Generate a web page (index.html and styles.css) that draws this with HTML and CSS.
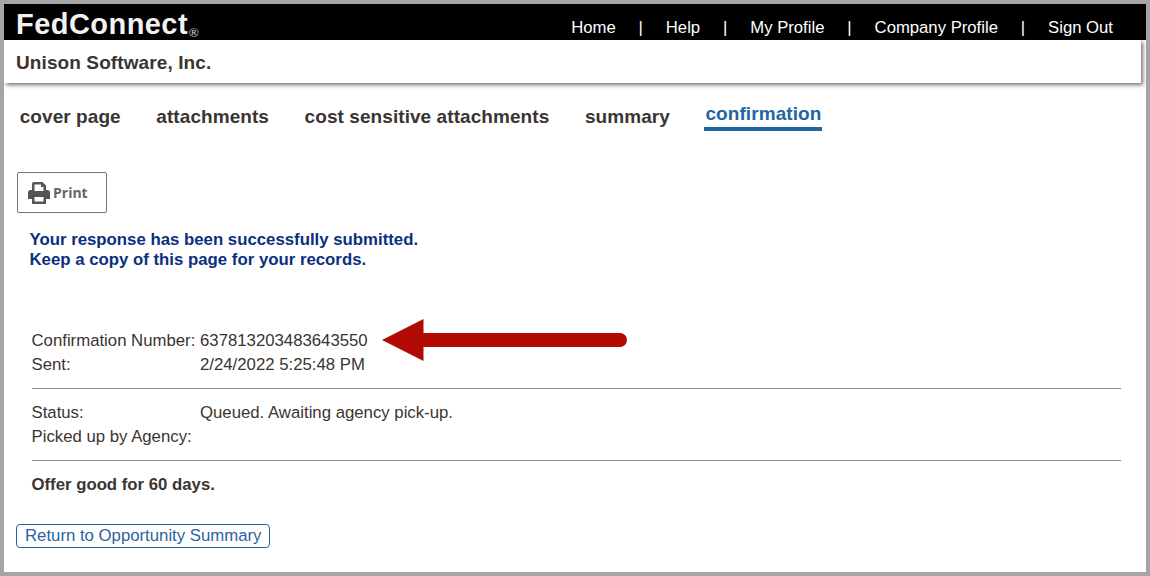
FILE: index.html
```html
<!DOCTYPE html>
<html lang="en">
<head>
<meta charset="utf-8">
<title>FedConnect</title>
<link rel="stylesheet" href="styles.css">
</head>
<body>
<div class="frame">
  <header class="topbar">
    <div class="logo">FedConnect<span class="reg">®</span></div>
    <nav class="topnav">
      <a>Home</a><span class="sep">|</span><a>Help</a><span class="sep">|</span><a>My Profile</a><span class="sep">|</span><a>Company Profile</a><span class="sep">|</span><a>Sign Out</a>
    </nav>
  </header>
  <div class="company">Unison Software, Inc.</div>
  <nav class="tabs">
    <a class="tab">cover page</a>
    <a class="tab">attachments</a>
    <a class="tab">cost sensitive attachments</a>
    <a class="tab">summary</a>
    <a class="tab active">confirmation</a>
  </nav>
  <button class="print" type="button">
    <svg class="print-icon" viewBox="0 0 22 22" width="22" height="22" aria-hidden="true">
      <path fill="#555" fill-rule="evenodd" d="M4 2C4 .9 4.900 0 6 0H14.500L18 3.500V8H19.500C21 8 22 9 22 10.500V17H18V22H4V17H0V10.500C0 9 1 8 2.500 8H4V2zM6.500 2.500V9H15.500V5H13V2.500H6.500zM6.500 15V19.500H15.500V15H6.500z"/>
    </svg>
    <span>Print</span>
  </button>
  <p class="message">Your response has been successfully submitted.<br>Keep a copy of this page for your records.</p>
  <section class="details">
    <div class="row"><span class="label">Confirmation Number:</span><span>637813203483643550</span></div>
    <div class="row"><span class="label">Sent:</span><span>2/24/2022 5:25:48 PM</span></div>
    <hr class="rule">
    <div class="row"><span class="label">Status:</span><span>Queued. Awaiting agency pick-up.</span></div>
    <div class="row"><span class="label">Picked up by Agency:</span><span></span></div>
    <hr class="rule">
    <div class="offer">Offer good for 60 days.</div>
  </section>
  <a class="return">Return to Opportunity Summary</a>
  <svg class="arrow" viewBox="0 0 246 42" width="246" height="42" aria-hidden="true">
    <path fill="#b00a02" d="M0 21L41.500 0V14H238a7 7 0 0 1 0 14H41.500V42z"/>
  </svg>
</div>
</body>
</html>
```
FILE: styles.css
```css
* { box-sizing: border-box; }
html, body { margin: 0; padding: 0; }
body { background: #fff; font-family: "Liberation Sans", Arial, sans-serif; color: #3a3432; }
.frame {
  position: relative;
  width: 1150px;
  height: 576px;
  border: 4px solid #a5a5a5;
  background: #fff;
  overflow: hidden;
}
.topbar {
  height: 36px;
  background: #000;
  color: #fff;
  display: flex;
  justify-content: space-between;
  padding: 0 33px 0 12px;
}
.logo {
  font-size: 29px;
  font-weight: 700;
  line-height: 40px;
  height: 36px;
  letter-spacing: 0.45px;
  color: #f2f2f2;
}
.reg {
  font-size: 13px;
  font-weight: 700;
  color: #aaa;
  letter-spacing: 0;
  margin-left: 1px;
  vertical-align: -3px;
  line-height: 1;
}
.topnav {
  display: flex;
  align-items: center;
  font-size: 16.700px;
  padding-top: 11px;
}
.sep { margin: 0 22.900px; }
.company {
  height: 43px;
  width: 1137px;
  padding: 1px 0 0 12px;
  font-size: 19px;
  font-weight: 700;
  line-height: 43px;
  background: #fff;
  box-shadow: 2px 2px 4px rgba(0,0,0,.55);
  letter-spacing: 0.1px;
}
.tabs {
  display: flex;
  align-items: flex-end;
  gap: 33.600px;
  height: 48px;
  padding-left: 14.700px;
  font-size: 19px;
  font-weight: 700;
  letter-spacing: 0.07px;
}
.tab { padding: 3px 1px 3px; line-height: 22px; height: 28px; display: block; }
.tab.active {
  color: #2364a2;
  border-bottom: 4px solid #2364a2;
  padding-top: 0;
  padding-bottom: 2px;
}
.print {
  display: flex;
  align-items: center;
  gap: 3px;
  margin: 41px 0 0 13px;
  width: 90px;
  height: 41px;
  padding: 0 0 0 10px;
  background: #fff;
  border: 1px solid #777;
  border-radius: 2px;
  font-family: "Open Sans", sans-serif;
  font-size: 14px;
  font-weight: 700;
  color: #666;
}
.message {
  margin: 17px 0 0 25.500px;
  font-size: 16.800px;
  font-weight: 700;
  line-height: 20px;
  color: #0c2f7f;
}
.details {
  margin: 59px 25px 0 27.500px;
  font-size: 16.750px;
}
.row { display: flex; height: 24px; line-height: 24px; }
.label { width: 168.500px; }
.rule { margin: 11px 0 12px; border: 0; border-top: 1px solid #8c8c8c; height: 1px; }
.offer { font-weight: 700; line-height: 24px; margin-top: 0; }
.return {
  display: inline-block;
  margin: 27px 0 0 12px;
  height: 24px;
  width: 254px;
  padding: 0 0 0 8px;
  line-height: 21px;
  font-size: 16.750px;
  color: #2b63a3;
  border: 1px solid #2364a2;
  border-radius: 4px;
  white-space: nowrap;
}
.arrow { position: absolute; left: 378px; top: 315px; }
```
